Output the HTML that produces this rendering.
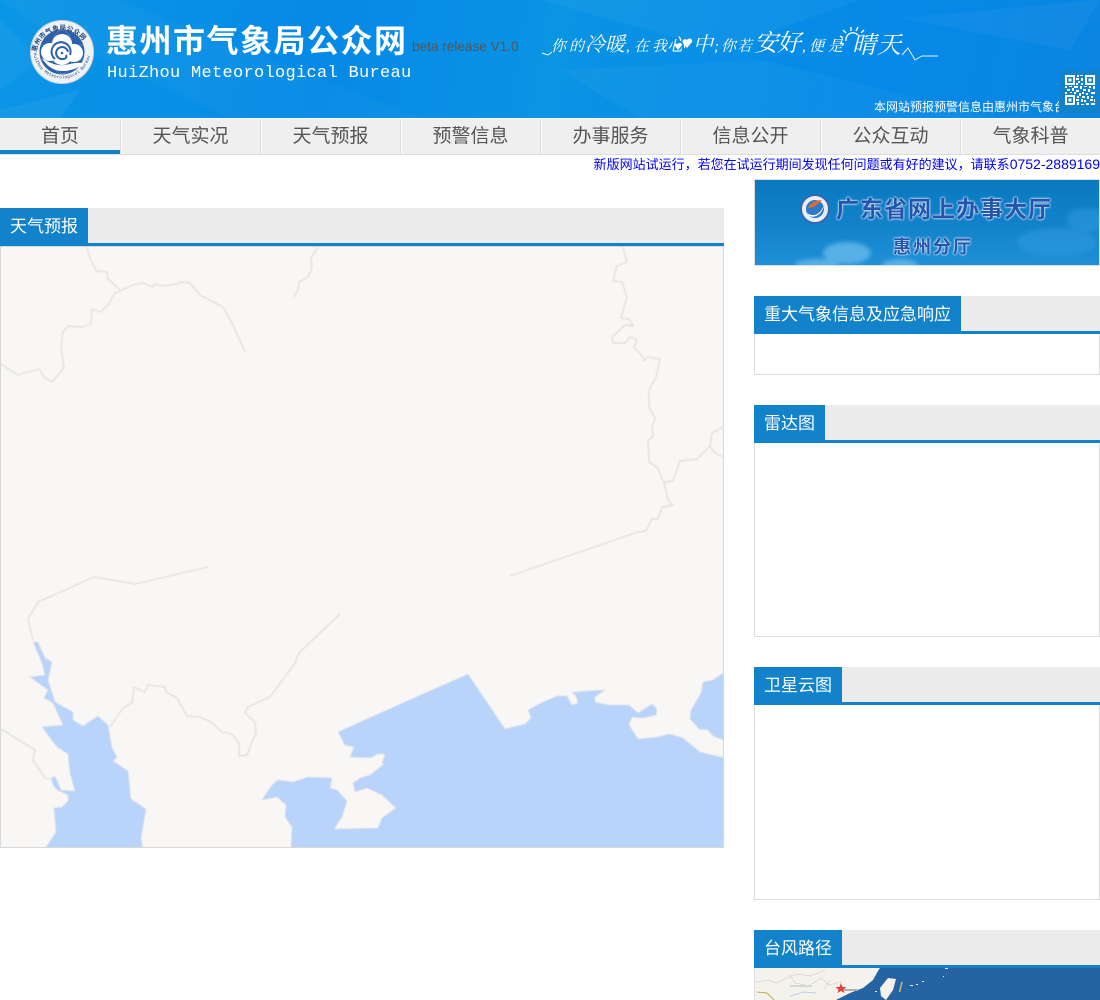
<!DOCTYPE html>
<html lang="zh-CN">
<head>
<meta charset="utf-8">
<title>惠州市气象局公众网</title>
<style>
html,body{margin:0;padding:0;background:#fff;}
body{width:1100px;height:1000px;overflow:hidden;position:relative;font-family:"Liberation Sans","WenQuanYi Zen Hei","Noto Sans CJK SC",sans-serif;}
.a{position:absolute;white-space:nowrap;}
#hd{left:0;top:0;width:1100px;height:118px;background:linear-gradient(100deg,#0a96e6 0%,#0589e6 30%,#0a94e4 50%,#0589e8 80%,#0a85e0 100%);overflow:hidden;}
.nav{position:absolute;top:119px;height:35px;width:139px;background:#efefef;color:#555;font-size:19px;line-height:36px;text-align:center;}
.sep{position:absolute;top:119px;width:1px;height:35px;background:#ddd;box-shadow:1px 0 0 #fafafa;}
.bar{position:absolute;height:35px;background:#ececec;border-bottom:3px solid #1282cb;}
.tab{position:absolute;height:38px;background:#1282cb;color:#fff;font-size:17px;line-height:38px;text-align:center;}
.box{position:absolute;box-sizing:border-box;border:1px solid #ddd;border-top:0;background:#fff;}
.t{position:absolute;white-space:nowrap;color:#fff;font-family:"Liberation Serif","Noto Serif CJK SC",serif;font-style:italic;line-height:24px;height:24px;}
.s{font-size:15px;top:35px;}
.m{font-size:20px;top:33px;}
.b{font-size:24px;top:32px;}
</style>
</head>
<body>
<div id="hd" class="a">
<svg class="a" style="left:0;top:0" width="1100" height="118" viewBox="0 0 1100 118">
<g fill="#fff">
<polygon points="0,0 120,0 420,118 230,118 60,40" opacity=".03"/>
<polygon points="0,110 80,90 60,118 0,118" opacity=".05"/>
<polygon points="540,0 860,0 720,50" opacity=".04"/>
<polygon points="560,70 760,60 1000,118 640,118" opacity=".035"/>
<polygon points="900,18 1100,0 1070,50" opacity=".04"/>
<polygon points="0,20 40,60 0,90" opacity=".04"/>
</g>
<!-- logo -->
<circle cx="62" cy="52" r="32" fill="#eef2f4"/>
<circle cx="62" cy="52" r="31.5" fill="none" stroke="#b9c4cc" stroke-width=".8"/>
<circle cx="62" cy="52" r="22.5" fill="#2d60aa"/>
<g fill="none" stroke="#8fb0d8" stroke-width=".5" opacity=".8"><ellipse cx="62" cy="52" rx="11" ry="22"/><path d="M40 45h44M40 60h44"/></g>
<defs>
<path id="ringT" d="M36 56a26 26 0 1 1 52 0"/>
<path id="ringB" d="M33.5 50a28.500 28.500 0 0 0 57 0"/>
</defs>
<text font-size="6.600" font-weight="bold" fill="#26467e" font-family="'Noto Sans CJK SC',sans-serif" letter-spacing=".2"><textPath href="#ringT" startOffset="4">惠州市气象局公众网</textPath></text>
<text font-size="4.300" fill="#26467e" font-family="'Liberation Mono',monospace" letter-spacing=".2"><textPath href="#ringB" startOffset="3">HuiZhou Meteorological Bureau</textPath></text>
<g fill="#fff">
<circle cx="62" cy="44" r="10"/><circle cx="50" cy="52" r="9"/><circle cx="74" cy="53" r="9"/><circle cx="62" cy="54" r="11"/>
<path d="M42 58c8 5 14 8 22 7 7-1 12-3 20-2-5 5-13 8-22 8-9 0-16-6-20-13z"/>
</g>
<g fill="none" stroke="#2d60aa" stroke-width="2"><path d="M55 59a9.500 9.500 0 1 1 15-4"/><path d="M68 52a6 6 0 1 0-5 7c3 0 4-2 3-4"/></g>
<circle cx="62" cy="53" r="1.300" fill="#2d60aa"/>
<!-- tagline decorations -->
<path d="M542 53l6 2 4-3" stroke="#fff" stroke-width="1" fill="none"/>
<path d="M902 55l6-7 7 12 7-4h16" stroke="#dff1ff" stroke-width="1" fill="none"/>
<path d="M687 40c2-3 6-1 5 2l-5 6-4-5c-2-3 2-5 4-3zM678 44c1-2 4-1 4 1l-4 5-3-4c-1-2 2-3 3-2z" fill="#fff"/>
<g stroke="#fff" stroke-width="1.400" fill="none"><path d="M846 41a7 7 0 0 1 12-6"/><path d="M844 44l-4-1M843 38l-3-2M846 33l-3-3M851 31v-4M856 31l2-4M861 33l3-3M865 37l3-1"/></g>
</svg>
<div class="a" style="left:106px;top:21px;color:#fff;font-size:32px;font-weight:bold;letter-spacing:1.500px;line-height:40px;">惠州市气象局公众网</div>
<div class="a" style="left:107px;top:64px;color:#fff;font-family:'Liberation Mono',monospace;font-size:17px;letter-spacing:.3px;line-height:20px;">HuiZhou Meteorological Bureau</div>
<div class="a" style="left:412px;top:39px;color:#555;font-size:13.600px;line-height:16px;">beta release V1.0</div>
<span class="t s" style="left:551px">你</span><span class="t s" style="left:569px">的</span>
<span class="t m" style="left:585px">冷</span><span class="t m" style="left:605px">暖</span>
<span class="t s" style="left:626px">,</span>
<span class="t s" style="left:634px">在</span><span class="t s" style="left:652px">我</span>
<span class="t m" style="left:667px;font-size:18px">心</span>
<span class="t m" style="left:693px">中</span>
<span class="t s" style="left:714px">;</span>
<span class="t s" style="left:721px">你</span><span class="t s" style="left:737px">若</span>
<span class="t b" style="left:754px">安</span><span class="t b" style="left:777px">好</span>
<span class="t s" style="left:802px">,</span>
<span class="t s" style="left:809px">便</span><span class="t s" style="left:828px">是</span>
<span class="t b" style="left:852px;top:34px">晴</span><span class="t b" style="left:877px;top:34px">天</span>
<div class="a" style="left:874px;top:99px;color:#fff;font-size:12px;line-height:16px;">本网站预报预警信息由惠州市气象台</div>
<div class="a" style="left:1059px;top:70px;width:41px;height:43px;background:#1282cb;">
<svg width="41" height="43" viewBox="0 0 41 43" style="display:block" shape-rendering="crispEdges">
<g fill="none" stroke="#fff" stroke-width="2"><rect x="7" y="6" width="8" height="8"/><rect x="27" y="6" width="8" height="8"/><rect x="7" y="26" width="8" height="8"/></g>
<g fill="#fff"><rect x="9.500" y="8.500" width="3" height="3"/><rect x="29.500" y="8.500" width="3" height="3"/><rect x="9.500" y="28.500" width="3" height="3"/>
<path d="M18 5h2v2h-2zM21 5h3v1h-3zM17 8h3v2h-3zM22 8h2v3h-2zM19 11h2v2h-2zM17 13h2v2h-2zM22 13h2v2h-2zM6 16h2v2H6zM10 16h3v1h-3zM15 16h4v2h-4zM21 16h2v3h-2zM25 16h3v1h-3zM30 16h2v2h-2zM34 16h2v3h-2zM8 19h3v2H8zM13 18h2v3h-2zM17 20h3v2h-3zM24 19h3v2h-3zM29 19h2v3h-2zM6 22h2v2H6zM11 22h2v1h-2zM15 22h2v2h-2zM20 23h2v3h-2zM23 22h2v2h-2zM27 23h2v2h-2zM32 22h4v2h-4zM18 26h2v2h-2zM23 26h3v2h-3zM28 26h2v3h-2zM32 26h2v2h-2zM17 29h3v2h-3zM22 29h2v3h-2zM25 30h2v2h-2zM31 29h3v2h-3zM35 29h1v3h-1zM18 32h2v3h-2zM27 33h3v2h-3zM32 33h4v2h-4zM22 34h3v1h-3z"/></g>
</svg></div>
</div>

<!-- nav -->
<div class="a" style="left:0;top:118px;width:1100px;height:37px;background:#fff;border-bottom:1px solid #ddd;box-sizing:border-box"></div>
<div class="nav" style="left:0;width:120px;height:31px;">首页</div>
<div class="a" style="left:0;top:150px;width:120px;height:4px;background:#1282cb"></div>
<div class="nav" style="left:121px">天气实况</div>
<div class="nav" style="left:261px">天气预报</div>
<div class="nav" style="left:401px">预警信息</div>
<div class="nav" style="left:541px">办事服务</div>
<div class="nav" style="left:681px">信息公开</div>
<div class="nav" style="left:821px">公众互动</div>
<div class="nav" style="left:961px">气象科普</div>
<div class="sep" style="left:120px"></div><div class="sep" style="left:260px"></div><div class="sep" style="left:400px"></div><div class="sep" style="left:540px"></div><div class="sep" style="left:680px"></div><div class="sep" style="left:820px"></div><div class="sep" style="left:960px"></div>

<div class="a" style="right:0;top:155px;color:#00f;font-size:13px;line-height:17px;">新版网站试运行<span style="font-family:'Noto Sans CJK TC',sans-serif">，</span>若您在试运行期间发现任何问题或有好的建议<span style="font-family:'Noto Sans CJK TC',sans-serif">，</span>请联系<span style="font-size:14px">0752-2889169</span></div>

<!-- left section -->
<div class="bar" style="left:0;top:208px;width:724px"></div>
<div class="tab" style="left:0;top:208px;width:88px">天气预报</div>
<svg class="a" style="left:0;top:246px" width="724" height="602" viewBox="0 246 724 602">
<defs><filter id="bl" x="-2%" y="-2%" width="104%" height="104%"><feGaussianBlur stdDeviation=".4"/></filter></defs>
<rect x="0" y="246" width="724" height="602" fill="#f8f7f5"/>
<g filter="url(#bl)">
<g fill="#b8d4fb" stroke="#e2e0dc" stroke-width=".6">
<polygon points="33,642 38,642 45,658 52,662 48,680 55,702 73,712 73,720 83,726 98,716 108,725 112,748 117,757 113,761 128,771 131,799 146,809 141,838 143,850 44,850 56,832 54,808 62,807 68,801 68,795 57,790 75,791 70,773 68,754 57,747 42,727 63,725 53,703 44,698 48,690 30,677 45,675 42,663"/>
<polygon points="51,778 55,776 62,792 57,790 53,785"/>
<polygon points="291,850 292,827 285,817 286,805 277,797 262,800 272,785 278,780 293,782 308,777 332,778 330,788 337,790 347,801 342,817 334,829 378,828 382,818 396,808 382,795 367,788 355,792 353,783 360,778 370,775 384,764 382,763 385,754 378,754 370,758 350,757 354,747 345,745 338,732 360,722 468,674 505,729 525,724 531,718 528,710 543,702 557,696 567,696 572,705 578,703 576,696 572,692 605,690 595,697 595,702 608,705 629,705 638,713 652,704 657,709 656,715 643,718 632,717 629,725 638,739 657,737 670,734 683,738 700,752 726,758 726,850"/>
<polygon points="726,671 713,680 703,682 701,693 691,710 690,719 699,729 708,730 713,736 726,741"/>
</g>
<g fill="none" stroke="#e2e0dd" stroke-width="1.400" stroke-linejoin="round">
<polyline points="87,247 90,258 96,271 107,272 108,279 120,290"/>
<polyline points="120,291 133,285 143,283 153,287 155,284 163,286 177,284 180,282 190,283 200,295 223,307 233,325 245,352"/>
<polyline points="120,291 115,293 108,305 100,312 92,309 91,324 82,327 68,326 63,332 61,347 64,368 52,382 45,378 39,369 18,375 10,370 7,368 1,364"/>
<polyline points="318,247 311,258 312,268 308,277 299,282 298,290 294,297"/>
<polyline points="623,247 627,262 617,266 613,281 622,282 627,297 621,318 629,319 633,326 625,325 612,337 613,343 625,343 630,337 637,340 634,347 643,357 644,361 647,357 660,359 656,377 649,390 649,407 655,418 652,428 653,437 648,440 649,462 658,468 662,479 664,482 668,500 673,505 662,507 658,519 652,519 646,531 638,532 510,576"/>
<polyline points="664,482 673,481 680,461 697,459 710,446 712,433 723,427"/>
<polyline points="710,446 715,453 723,457"/>
<polyline points="208,567 135,584 94,577 38,602 28,619 33,640"/>
<polyline points="340,614 299,653 295,663 270,697 248,707 245,713 255,722 256,733 250,747 247,755 239,756 239,743 232,734 222,732 211,722 200,717 187,716 177,698 166,692 165,687 148,685 145,692 134,687 132,703 123,708 110,727"/>
<polyline points="1,729 35,750 33,760 45,778 50,779"/>
</g>
</g>
<rect x=".5" y="246.500" width="723" height="601" fill="none" stroke="#d8d8d8"/>
</svg>

<!-- banner -->
<div class="a" style="left:754px;top:179px;width:346px;height:87px;box-sizing:border-box;border:1px solid #ddd;overflow:hidden;background:linear-gradient(180deg,#0a79bf 0%,#1283cb 55%,#1f90d8 100%);">
<svg class="a" style="left:0;top:0" width="344" height="85" viewBox="0 0 344 85">
<defs><filter id="cb"><feGaussianBlur stdDeviation="2"/></filter></defs>
<g fill="#6cbcec" opacity=".75" filter="url(#cb)"><ellipse cx="92" cy="73" rx="24" ry="11"/><ellipse cx="62" cy="85" rx="22" ry="6"/><ellipse cx="145" cy="85" rx="18" ry="6"/></g>
<g fill="#2d99de" opacity=".6" filter="url(#cb)"><ellipse cx="302" cy="62" rx="40" ry="14"/><ellipse cx="332" cy="40" rx="20" ry="12"/></g>
<circle cx="60" cy="29" r="14" fill="#e9eef6" stroke="#3766ae" stroke-width="2"/>
<circle cx="60" cy="29" r="9" fill="#2c7ac5"/>
<path d="M52 33c5 4 13 3 17-8-2 12-14 15-17 8z" fill="#fff"/><path d="M53 28c3-6 9-8 14-8-4 3-7 8-14 8z" fill="#e8692a"/>
</svg>
<div class="a" style="left:81px;top:13px;color:#2454ab;font-size:23px;font-weight:bold;letter-spacing:1px;line-height:32px;text-shadow:0 0 2px #fff,0 0 2px #dfefff;">广东省网上办事大厅</div>
<div class="a" style="left:138px;top:54px;color:#2454ab;font-size:18px;font-weight:bold;letter-spacing:2px;line-height:26px;text-shadow:0 0 2px #fff,0 0 2px #dfefff;">惠州分厅</div>
</div>

<!-- right sections -->
<div class="bar" style="left:754px;top:296px;width:346px"></div>
<div class="tab" style="left:754px;top:296px;width:207px">重大气象信息及应急响应</div>
<div class="box" style="left:754px;top:334px;width:346px;height:41px"></div>

<div class="bar" style="left:754px;top:405px;width:346px"></div>
<div class="tab" style="left:754px;top:405px;width:71px">雷达图</div>
<div class="box" style="left:754px;top:443px;width:346px;height:194px"></div>

<div class="bar" style="left:754px;top:667px;width:346px"></div>
<div class="tab" style="left:754px;top:667px;width:88px">卫星云图</div>
<div class="box" style="left:754px;top:705px;width:346px;height:195px"></div>

<div class="bar" style="left:754px;top:930px;width:346px"></div>
<div class="tab" style="left:754px;top:930px;width:88px">台风路径</div>
<svg class="a" style="left:754px;top:968px" width="346" height="32" viewBox="754 968 346 32">
<rect x="754" y="968" width="346" height="32" fill="#2563a3"/>
<polygon points="755,968 880,968 878,971 873,980 863,988 850,993 842,997 836,1000 755,1000" fill="#f3f2ec"/>
<polygon points="888,978 896,979 893,990 886,1000 881,996 880,988" fill="#f3f2ec"/>
<path d="M902 982l-2.500 10" stroke="#cdbb78" stroke-width="1.500"/>
<g fill="#e8eef4"><rect x="910" y="985" width="3" height="1"/><rect x="916" y="984" width="2" height="1"/><rect x="922" y="981" width="2" height="1"/><rect x="943" y="976" width="1" height="1"/><rect x="945" y="968" width="3" height="1"/><rect x="875" y="991" width="2" height="1"/></g>
<g fill="none" stroke="#bdbcb4" stroke-width=".6" stroke-dasharray="2 1"><path d="M756 982l12-2 8 3 20-9 15 2 14-6"/><path d="M790 975l5 8 14 3 12-8 8 7 12-3"/><path d="M830 980l-6 9"/></g>
<path d="M757 992l10 1 5 5 2 2" fill="none" stroke="#c9a94e" stroke-width="1"/>
<path d="M790 996l14-4 12 1" stroke="#a8c6e4" fill="none" stroke-width=".8"/>
<rect x="790" y="985" width="22" height="2" fill="#d8d8d2"/>
<rect x="844" y="989" width="14" height="2" fill="#b0b0aa"/>
<polygon points="841,983 842.500,987 846.500,987 843.500,989.500 844.500,993 841,991 837.500,993 838.500,989.500 835.500,987 839.500,987" fill="#e04040"/>
<rect x="754" y="968" width="1" height="32" fill="#ddd"/>
</svg>
</body>
</html>
